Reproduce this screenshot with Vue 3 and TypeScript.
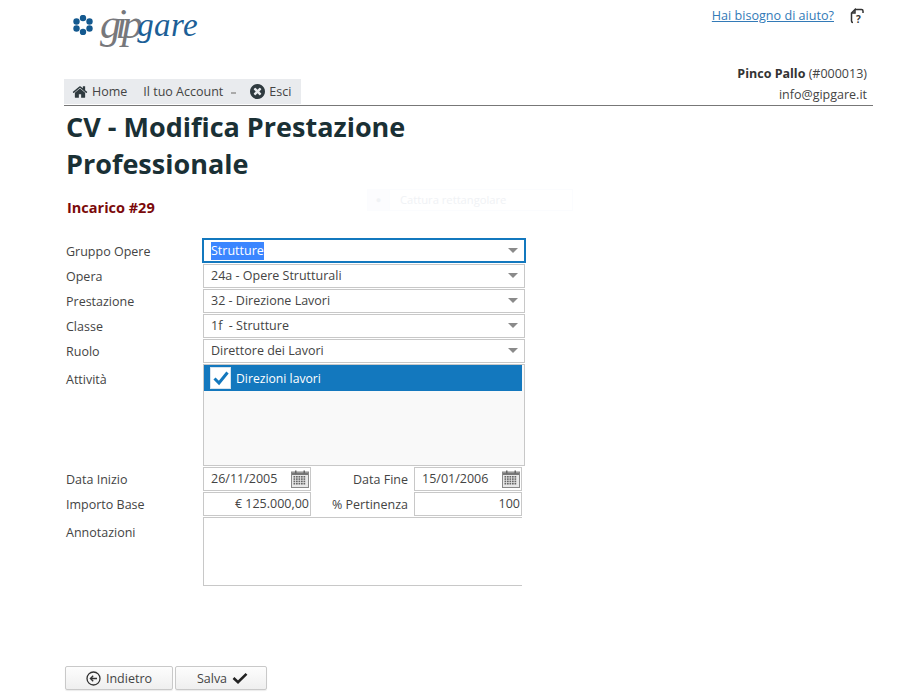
<script setup lang="ts">
const dots: [number, number][] = [[10, 3], [16.500, 6.500], [16.500, 13.500], [10, 17], [3.500, 13.500], [3.500, 6.500]]
interface SelectRow { label: string; value: string; focused?: boolean }
const selects: SelectRow[] = [
  { label: 'Gruppo Opere', value: 'Strutture', focused: true },
  { label: 'Opera', value: '24a - Opere Strutturali' },
  { label: 'Prestazione', value: '32 - Direzione Lavori' },
  { label: 'Classe', value: '1f  - Strutture' },
  { label: 'Ruolo', value: 'Direttore dei Lavori' },
]
const calCells = [0, 1, 2, 3].flatMap((r) => [0, 1, 2, 3, 4].map((c) => ({ x: 2.500 + c * 2.500, y: 6 + r * 2.300 })))
</script>

<template>
  <div class="page">
    <div class="ghost"><span class="ghost-ico">●</span><span class="ghost-txt">Cattura rettangolare</span></div>

    <header class="header">
      <div class="top">
        <div class="logo">
          <svg class="flower" width="22" height="20" viewBox="0 0 20 20">
            <circle v-for="(d, i) in dots" :key="i" :cx="d[0]" :cy="d[1]" r="3.200" fill="#14598f" />
          </svg>
          <span class="gip">gip</span><span class="gare">gare</span>
        </div>
        <div class="help">
          <a class="help-link">Hai bisogno di aiuto?</a>
          <svg class="help-ico" width="15" height="16" viewBox="0 0 15 16">
            <path d="M5 1.500h6.500q1.500 0 1.500 1.500v2M3 14.500q-1.500 0-1.500-1.500V5L5 1.500V5H2" fill="none" stroke="#333" stroke-width="1.500" />
            <text x="6" y="14.500" class="help-q">?</text>
          </svg>
        </div>
      </div>
      <div class="bottom">
        <nav class="nav">
          <span class="nav-item">
            <svg width="16" height="14" viewBox="0 0 1792 1536"><path transform="translate(0 -128)" fill="#2f3a3f" d="M1472 992v480q0 26-19 45t-45 19h-384v-384h-256v384h-384q-26 0-45-19t-19-45v-480q0-1 .5-3t.5-3l575-474 575 474q1 2 1 6zm223-69l-62 74q-8 9-21 11h-3q-13 0-21-7l-692-577-692 577q-12 8-24 7-13-2-21-11l-62-74q-8-10-7-23.500t11-21.500l719-599q32-26 76-26t76 26l244 204v-195q0-14 9-23t23-9h192q14 0 23 9t9 23v408l219 182q10 8 11 21.500t-7 23.500z" /></svg>
            <span>Home</span>
          </span>
          <span class="nav-item account"><span>Il tuo Account</span><i class="caret"></i></span>
          <span class="nav-item">
            <svg width="15" height="15" viewBox="128 128 1536 1536"><path fill="#2f3a3f" d="M1277 1122q0-26-19-45l-181-181 181-181q19-19 19-45 0-27-19-46l-90-90q-19-19-46-19-26 0-45 19l-181 181-181-181q-19-19-45-19-27 0-46 19l-90 90q-19 19-19 46 0 26 19 45l181 181-181 181q-19 19-19 45 0 27 19 46l90 90q19 19 46 19 26 0 45-19l181-181 181 181q19 19 45 19 27 0 46-19l90-90q19-19 19-46zm387-226q0 209-103 385.500t-279.500 279.500-385.500 103-385.500-103-279.500-279.500-103-385.500 103-385.500 279.500-279.500 385.500-103 385.500 103 279.500 279.500 103 385.500z" /></svg>
            <span>Esci</span>
          </span>
        </nav>
        <div class="user">
          <div><b>Pinco Pallo</b> (#000013)</div>
          <div>info@gipgare.it</div>
        </div>
      </div>
    </header>

    <h1 class="title">CV - Modifica Prestazione Professionale</h1>
    <h2 class="sub">Incarico #29</h2>

    <form class="form" @submit.prevent>
      <template v-for="s in selects" :key="s.label">
        <label class="lbl">{{ s.label }}</label>
        <div class="select" :class="{ focused: s.focused }">
          <span class="sel-val" :class="{ selected: s.focused }">{{ s.value }}</span>
          <i class="arrow"></i>
        </div>
      </template>

      <label class="lbl lbl-att">Attività</label>
      <div class="list">
        <div class="list-item">
          <span class="check">
            <svg width="18" height="16" viewBox="0 0 18 16"><path d="M2.500 8.500 7 13 15.500 2.500" fill="none" stroke="#1378be" stroke-width="3" /></svg>
          </span>
          <span>Direzioni lavori</span>
        </div>
      </div>

      <label class="lbl">Data Inizio</label>
      <div class="pair">
        <div class="input w108 date">
          <span class="val">26/11/2005</span>
          <svg class="cal" width="18" height="18" viewBox="0 0 18 18">
            <rect x=".5" y="2" width="17" height="15.500" fill="#e8e8e8" stroke="#888" />
            <rect x="1" y="2.500" width="16" height="2.500" fill="#777" />
            <rect x="4" y=".5" width="1.500" height="3" fill="#666" /><rect x="12.500" y=".5" width="1.500" height="3" fill="#666" />
            <rect v-for="(c, i) in calCells" :key="i" :x="c.x" :y="c.y" width="1.700" height="1.600" fill="#666" />
          </svg>
        </div>
        <label class="lbl-r">Data Fine</label>
        <div class="input w108 date">
          <span class="val">15/01/2006</span>
          <svg class="cal" width="18" height="18" viewBox="0 0 18 18">
            <rect x=".5" y="2" width="17" height="15.500" fill="#e8e8e8" stroke="#888" />
            <rect x="1" y="2.500" width="16" height="2.500" fill="#777" />
            <rect x="4" y=".5" width="1.500" height="3" fill="#666" /><rect x="12.500" y=".5" width="1.500" height="3" fill="#666" />
            <rect v-for="(c, i) in calCells" :key="i" :x="c.x" :y="c.y" width="1.700" height="1.600" fill="#666" />
          </svg>
        </div>
      </div>

      <label class="lbl">Importo Base</label>
      <div class="pair">
        <div class="input w108 num"><span class="val">€ 125.000,00</span></div>
        <label class="lbl-r">% Pertinenza</label>
        <div class="input w108 num"><span class="val">100</span></div>
      </div>

      <label class="lbl lbl-note">Annotazioni</label>
      <div class="notes"></div>
    </form>

    <div class="actions">
      <button type="button" class="btn back">
        <svg width="15" height="15" viewBox="0 0 15 15"><circle cx="7.500" cy="7.500" r="6.500" fill="none" stroke="#333" stroke-width="1.300" /><path d="M11 7.500H4.500M7.200 4.700 4.400 7.500l2.800 2.800" fill="none" stroke="#333" stroke-width="1.300" /></svg>
        <span>Indietro</span>
      </button>
      <button type="button" class="btn save">
        <span>Salva</span>
        <svg width="16" height="12" viewBox="0 0 16 12"><path d="M1.500 6 6 10.200 14.500 1.800" fill="none" stroke="#222" stroke-width="2.600" /></svg>
      </button>
    </div>
  </div>
</template>

<style scoped>
.page {
  position: relative;
  width: 899px;
  height: 700px;
  box-sizing: border-box;
  padding-left: 64px;
  overflow: hidden;
  background: #fff;
  font-family: "Open Sans", "Liberation Sans", sans-serif;
  font-size: 12.500px;
  color: #444;
}
.ghost {
  position: absolute;
  left: 367px;
  top: 189px;
  width: 206px;
  height: 22px;
  display: flex;
  border: 1px solid #fbfcfe;
  box-sizing: border-box;
  font-size: 11.200px;
  color: #f0f2f5;
  line-height: 20px;
}
.ghost-ico { width: 21px; text-align: center; border-right: 1px solid #fbfcfe; font-size: 9px; background: #fcfcfe; }
.ghost-txt { padding-left: 10px; }
.header { width: 809px; height: 106px; box-sizing: border-box; border-bottom: 1px solid #777; display: flex; flex-direction: column; justify-content: space-between; }
.top { display: flex; justify-content: space-between; align-items: flex-start; }
.logo { display: flex; align-items: flex-start; height: 52px; padding-left: 8px; line-height: 1; font-family: "Liberation Serif", serif; font-style: italic; }
.flower { margin-top: 15px; margin-right: 6px; }
.gip { color: #77787c; font-size: 42px; line-height: 52px; letter-spacing: -5.500px; margin-top: -2px; white-space: nowrap; }
.gare { color: #1c5f97; font-size: 33px; line-height: 40px; margin-top: 5px; letter-spacing: .4px; }
.help { display: flex; align-items: center; padding-top: 7px; margin-right: 8px; }
.help-link { color: #337ab7; text-decoration: underline; font-size: 12.600px; line-height: 17px; }
.help-ico { margin-left: 16px; }
.help-q { font: 700 10px "Open Sans", sans-serif; fill: #333; }
.bottom { display: flex; justify-content: space-between; align-items: flex-end; }
.nav { display: flex; align-items: center; width: 237px; height: 25px; margin-bottom: 1px; background: #e9ebee; box-sizing: border-box; padding-left: 8px; color: #444; }
.nav-item { display: flex; align-items: center; gap: 4px; }
.account { margin-left: 16px; margin-right: 14px; gap: 0; }
.caret { display: inline-block; width: 5px; height: 1.500px; background: #aaa; margin-left: 8px; margin-top: 3px; }
.user { text-align: right; padding-right: 6px; line-height: 21px; color: #444; }
.user b { font-weight: 700; color: #333; }
.title { margin: 2px 0 0 2px; width: 430px; font-size: 27px; line-height: 37px; font-weight: 700; color: #1a3035; }
.sub { margin: 16px 0 0 3px; font-size: 14.500px; line-height: 20px; font-weight: 700; color: #7b0a0a; }
.form { display: grid; grid-template-columns: 139px 322px; grid-auto-rows: auto; margin-top: 21px; }
.lbl { padding-left: 2px; height: 25px; line-height: 26px; }
.lbl-att { line-height: 32px; height: 103px; }
.lbl-note { line-height: 32px; }
.select { position: relative; box-sizing: border-box; height: 24px; margin-bottom: 1px; border: 1px solid #c8c8c8; display: flex; align-items: center; padding-left: 7px; white-space: pre; }
.select.focused { border: 2px solid #1378be; margin: -1px -1px 1px; height: 25px; padding-left: 7px; }
.sel-val { line-height: 18px; }
.selected { background: #3b86ff; color: #fff; }
.arrow { position: absolute; right: 6px; top: 8px; width: 0; height: 0; border-left: 5px solid transparent; border-right: 5px solid transparent; border-top: 5px solid #8a8a8a; }
.list { box-sizing: border-box; height: 102px; margin-bottom: 1px; border: 1px solid #c8c8c8; background: #f9f9f9; padding: 0 2px 0 0; }
.list-item { display: flex; align-items: center; gap: 5px; height: 26px; padding-left: 6px; background: #1378be; color: #fff; font-size: 12.200px; }
.check { display: flex; align-items: center; justify-content: center; width: 21px; height: 22px; background: #fff; border: 1px solid #d5e3ee; box-sizing: border-box; }
.pair { display: flex; height: 25px; }
.input { box-sizing: border-box; height: 24px; border: 1px solid #c8c8c8; display: flex; align-items: center; }
.w108 { width: 108px; }
.date { justify-content: space-between; padding: 0 1px 0 7px; }
.num { justify-content: flex-end; padding-right: 1px; }
.val { padding-bottom: 2px; }
.lbl-r { width: 103px; padding-right: 6px; box-sizing: border-box; text-align: right; line-height: 25px; }
.notes { box-sizing: border-box; width: 319px; height: 69px; border: 1px solid #c8c8c8; border-right: none; }
.actions { position: absolute; left: 65px; top: 666px; display: flex; gap: 2px; }
.btn { box-sizing: border-box; height: 24px; display: flex; align-items: center; justify-content: center; gap: 5px; border: 1px solid #c9c9c9; border-radius: 2px; background: linear-gradient(#fdfdfd, #efefef); font: 12.500px "Open Sans", sans-serif; color: #444; padding: 0; box-shadow: 0 1px 1px rgba(0, 0, 0, .08); }
.back { width: 108px; }
.save { width: 92px; padding-left: 3px; }
</style>
